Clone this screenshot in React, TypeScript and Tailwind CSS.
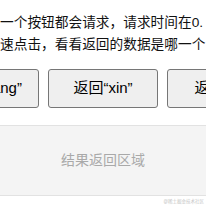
import React from "react";

const font = { fontFamily: '"Liberation Sans", "Noto Sans CJK SC", sans-serif' };

export default function App() {
  return (
    <div
      className="relative w-[206px] h-[206px] overflow-hidden bg-white"
      style={font}
    >
      <div className="pt-[12px] text-[13.7px] leading-[21.5px] text-[#111] whitespace-nowrap">
        <div>一个按钮都会请求，请求时间在0.</div>
        <div>速点击，看看返回的数据是哪一个</div>
      </div>
      <div className="mt-[14px] -ml-[71px] flex gap-[9px]">
        {["返回“wang”", "返回“xin”", "返回“liu”"].map((t) => (
          <button
            key={t}
            className="w-[110px] h-[39px] shrink-0 rounded-[3px] border border-[#767676] bg-[#efefef] text-[15px] text-black"
          >
            {t}
          </button>
        ))}
      </div>
      <div className="mt-[17px] h-[71px] border-y border-[#e2e2e2] bg-[#f4f4f4] flex items-center justify-center text-[14px] text-[#a9a9a9]">
        结果返回区域
      </div>
      <div className="absolute right-[2px] bottom-[2px] text-[4.5px] leading-none text-[#c4c4c4]">
        @稀土掘金技术社区
      </div>
    </div>
  );
}
